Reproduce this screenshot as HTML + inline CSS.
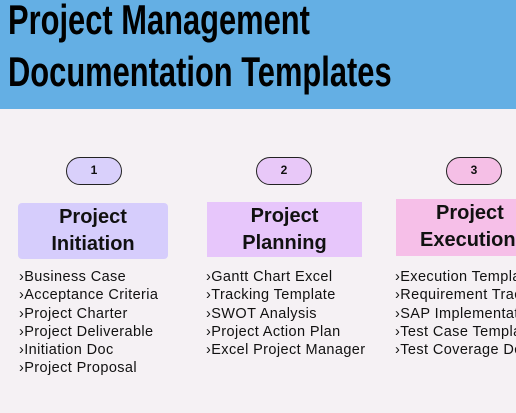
<!DOCTYPE html>
<html><head><style>
*{margin:0;padding:0;box-sizing:border-box}
html,body{width:516px;height:413px;overflow:hidden}
body{background:#f5f1f4;position:relative;font-family:"Liberation Sans",sans-serif}
.hdr{position:absolute;left:0;top:0;width:516px;height:109px;background:#64afe4}
.t{position:absolute;left:8px;font-family:"Liberation Sans",sans-serif;font-weight:bold;font-size:42px;color:#000;white-space:nowrap;transform-origin:0 0;transform:scaleX(0.735)}
.pill{position:absolute;top:157px;width:56px;height:28px;border:1.6px solid #222;border-radius:14px;text-align:center;line-height:25px;font-size:12px;font-weight:bold;color:#111}
.box{position:absolute;text-align:center;font-size:20px;font-weight:bold;line-height:27px;color:#111;padding-top:1px;overflow:hidden;white-space:nowrap}
.list{position:absolute;top:268px;font-size:14.5px;line-height:18.3px;color:#111;white-space:nowrap;letter-spacing:0.4px;overflow:hidden}
</style></head><body>
<div class="hdr"></div>
<div class="t" style="top:-4px">Project Management</div>
<div class="t" style="top:48px">Documentation Templates</div>
<div class="pill" style="left:66px;background:#d9d0fb">1</div>
<div class="pill" style="left:256px;background:#e8c8f8">2</div>
<div class="pill" style="left:446px;background:#f5bfe6">3</div>
<div class="box" style="left:18px;top:203px;width:150px;height:56px;background:#d6cdfc;border-radius:4px">Project<br>Initiation</div>
<div class="box" style="left:207px;top:202px;width:155px;height:55px;background:#e7c6fb">Project<br>Planning</div>
<div class="box" style="left:396px;top:199px;width:120px;height:57px;background:#f6bfe8;text-align:left;padding-left:40px">Project<br><span style="margin-left:-16px">Execution</span></div>
<div class="list" style="left:19px">›Business Case<br>›Acceptance Criteria<br>›Project Charter<br>›Project Deliverable<br>›Initiation Doc<br>›Project Proposal</div>
<div class="list" style="left:206px">›Gantt Chart Excel<br>›Tracking Template<br>›SWOT Analysis<br>›Project Action Plan<br>›Excel Project Manager</div>
<div class="list" style="left:395px;width:121px">›Execution Template<br>›Requirement Tracking<br>›SAP Implementation<br>›Test Case Template<br>›Test Coverage Doc</div>
</body></html>
